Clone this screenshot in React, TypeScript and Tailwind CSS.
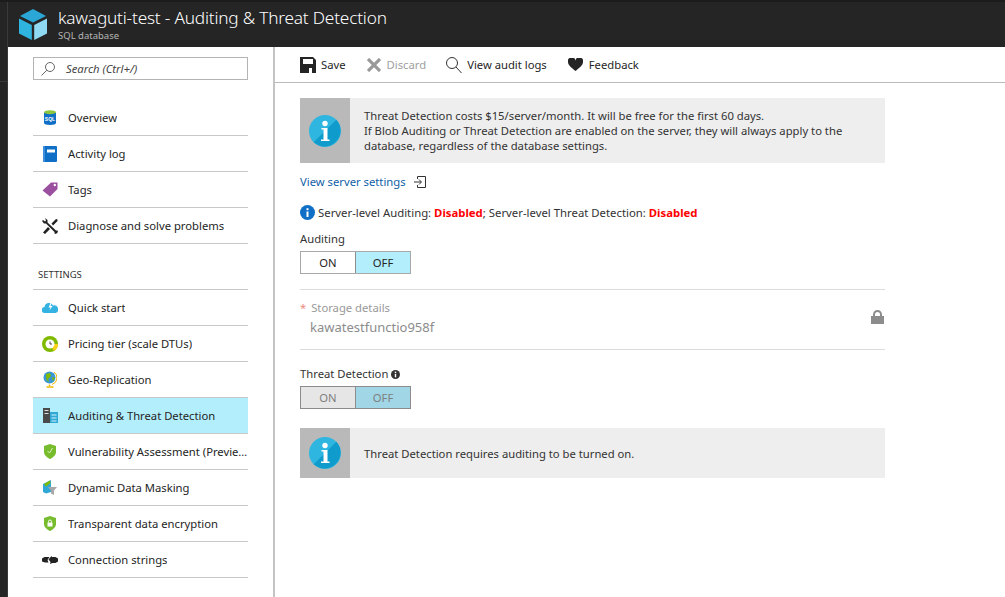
import React from "react";

const F = "font-['Noto_Sans','Open_Sans',sans-serif]";

function InfoBig() {
  return (
    <svg width="32" height="32" viewBox="0 0 32 32">
      <circle cx="16" cy="16" r="16" fill="#2fb6e0" />
      <path d="M27.3 4.7A16 16 0 0 1 4.7 27.3Z" fill="#0f9bcb" />
      <circle cx="16" cy="8.5" r="2.7" fill="#fff" />
      <path d="M12.5 13h6v11.5h2V26h-8.500v-1.500h2.500V14.500h-2Z" fill="#fff" />
    </svg>
  );
}

function Cube() {
  return (
    <svg width="28" height="31" viewBox="0 0 28 31">
      <path d="M14 0 27 7 14 13.500 1 7Z" fill="#2aa7d6" />
      <path d="M0 9.500 12.800 16V31L0 24.500Z" fill="#2fb4df" />
      <path d="M28 9.500 15.200 16V31L28 24.500Z" fill="#8fd9f2" />
    </svg>
  );
}

const icons: Record<string, React.ReactNode> = {
  overview: (
    <svg width="12" height="15" viewBox="0 0 12 15">
      <path d="M0 2.500H12V13C12 14.200 9.500 15 6 15 2.500 15 0 14.200 0 13Z" fill="#0f6fc6" />
      <ellipse cx="6" cy="2.200" rx="6" ry="2" fill="#8cc63f" />
      <text x="6" y="10.800" textAnchor="middle" fontSize="5" fontWeight="700" fill="#fff" fontFamily="Liberation Sans">SQL</text>
    </svg>
  ),
  log: (
    <svg width="14" height="16" viewBox="0 0 14 16">
      <rect width="14" height="16" rx="1" fill="#0f6fc6" />
      <rect x="0" y="0" width="2" height="16" fill="#3d8fdc" />
      <rect x="4" y="3.500" width="8" height="3" fill="#fff" />
    </svg>
  ),
  tag: (
    <svg width="16" height="15" viewBox="0 0 16 15">
      <path d="M9 0.500h6.500V7L8 14.500 0.500 8.500Z" fill="#9b4f9f" />
      <circle cx="12.800" cy="3" r="1.200" fill="#fff" />
    </svg>
  ),
  tools: (
    <svg width="16" height="16" viewBox="0 0 16 16" fill="#222">
      <path d="M3 0 5.500 2V4.500L14 12.500 15.500 12.500 16 14 14 16 12.500 15.500V14L4 5.500H2L0 3 1 2 3 3.500 4 2.500Z" />
      <path d="M9.500 5.500 14 1 15.500 1.500 15.500 3 11 7.500ZM6 9 8 11 3 16 1 14.500Z" />
    </svg>
  ),
  cloud: (
    <svg width="16" height="10" viewBox="0 0 16 10">
      <path d="M3 10A3 3 0 0 1 2.500 4 4.500 4.500 0 0 1 11 2.500 3.500 3.500 0 0 1 13.500 10Z" fill="#34b2e2" />
      <path d="M8.500 0 6.500 4.500h2L7.500 7.500 10.500 3h-2l1-3Z" fill="#fff" />
    </svg>
  ),
  pricing: (
    <svg width="16" height="16" viewBox="0 0 16 16">
      <circle cx="8" cy="8" r="8" fill="#7fba00" />
      <path d="M8 8 16 8A8 8 0 0 1 12 15Z" fill="#fcd116" />
      <circle cx="8" cy="8" r="4.500" fill="#fff" />
      <path d="M8 5.500V8H10" stroke="#444" fill="none" />
    </svg>
  ),
  geo: (
    <svg width="14" height="17" viewBox="0 0 14 17">
      <circle cx="6.500" cy="6.500" r="6" fill="#3b97d3" />
      <path d="M3 3 7 2 8 5 5 8 6 11 3.500 9ZM9 6 12 7 10 10Z" fill="#7fba00" />
      <path d="M11 1A7 7 0 0 1 9 13.500" stroke="#f2b705" fill="none" />
      <path d="M6.500 13.500V15M3.500 16h7" stroke="#f2b705" strokeWidth="1.500" />
    </svg>
  ),
  audit: (
    <svg width="15" height="15" viewBox="0 0 15 15">
      <rect width="7" height="15" fill="#4a4a4a" />
      <rect x="1.500" y="2" width="4" height="1" fill="#ddd" />
      <rect x="1.500" y="5" width="4" height="1" fill="#ddd" />
      <rect x="7" y="4" width="8" height="11" fill="#2fa8d5" />
      <path d="M8.500 7h5M8.500 10h5M8.500 13h5" stroke="#d6f3fb" />
    </svg>
  ),
  shieldCheck: (
    <svg width="12" height="15" viewBox="0 0 12 15">
      <path d="M6 0 12 2V8C12 11 9 13.500 6 15 3 13.500 0 11 0 8V2Z" fill="#76bc2d" />
      <path d="M3.500 7 5.500 9 8.500 4" stroke="#d8f0b8" fill="none" />
    </svg>
  ),
  mask: (
    <svg width="14" height="15" viewBox="0 0 14 15">
      <path d="M0 4 8 0V12L3 13.500 0 12Z" fill="#2fa8d5" />
      <path d="M1 4 7 0.500 7.500 3 3 6.500Z" fill="#7fba00" />
      <path d="M5 7h9l-3 3.500V15l-3-1.500v-3Z" fill="#a8a8a8" />
    </svg>
  ),
  shieldLock: (
    <svg width="12" height="15" viewBox="0 0 12 15">
      <path d="M6 0 12 2V8C12 11 9 13.500 6 15 3 13.500 0 11 0 8V2Z" fill="#76bc2d" />
      <rect x="3.500" y="6.500" width="5" height="4" fill="#fff" />
      <path d="M4.500 6.500V5.500a1.500 1.500 0 0 1 3 0v1" stroke="#fff" fill="none" />
    </svg>
  ),
  conn: (
    <svg width="16" height="8" viewBox="0 0 16 8" fill="#222">
      <path d="M0 2.500 2.500 1H7.500L5.500 4 6.500 6.500H3L0 5.500Z" />
      <path d="M16 2.500 13.500 1H10L9.500 0 6.500 3.500 8.500 6 8 8 10.500 7H13.500L16 5.500Z" />
    </svg>
  ),
};

function NavItem({ icon, label, active }: { icon: string; label: string; active?: boolean }) {
  return (
    <div className={`flex h-9 items-center border-b border-[#c8c8c8] ${active ? "bg-[#b3eefc]" : ""}`}>
      <div className="flex w-[35px] shrink-0 justify-center pr-[1px]">{icons[icon]}</div>
      <span className="truncate pt-[2px] text-[11.25px] text-[#252525]">{label}</span>
    </div>
  );
}

function Toggle({ disabled }: { disabled?: boolean }) {
  return (
    <div className={`flex h-[23px] w-[111px] border pt-0 text-[11.25px] ${disabled ? "border-[#8c8c8c] text-[#7f7f7f]" : "border-[#a8a8a8] text-[#252525]"}`}>
      <div className={`flex w-[54px] items-center justify-center pt-[1px] ${disabled ? "bg-[#e6e6e6]" : "bg-white"}`}>ON</div>
      <div className={`flex flex-1 items-center justify-center border-l pt-[1px] ${disabled ? "border-[#8c8c8c] bg-[#a0d6e6]" : "border-[#8c8c8c] bg-[#b3eefc]"}`}>OFF</div>
    </div>
  );
}

function Notice({ h, children }: { h: string; children: React.ReactNode }) {
  return (
    <div className={`flex w-[585px] bg-[#eeeeee] ${h}`}>
      <div className="flex w-[50px] shrink-0 items-center justify-center bg-[#b9b9b9]">
        <InfoBig />
      </div>
      <div className="flex flex-col justify-center pl-[14px] text-[11.25px] leading-[15px] text-[#333]">{children}</div>
    </div>
  );
}

export default function App() {
  return (
    <div className={`${F} flex h-[597px] w-[1005px] flex-col overflow-hidden bg-white`}>
      <header className="flex h-[47px] shrink-0 flex-col bg-[#252525]">
        <div className="h-[2px] bg-[#1c1c1c]" />
        <div className="flex flex-1 items-center">
          <div className="flex h-full w-2 shrink-0 border-r border-[#3a3a3a]" />
          <div className="ml-[11px] flex"><Cube /></div>
          <div className="ml-[11px] flex flex-col pb-[1px]">
            <span className="text-[17.25px] font-light leading-[22px] tracking-[-0.2px] text-white">kawaguti-test - Auditing &amp; Threat Detection</span>
            <span className="mt-[1px] text-[9.5px] leading-[12px] text-[#b5b5b5]">SQL database</span>
          </div>
        </div>
      </header>
      <div className="flex flex-1">
        <div className="flex w-2 shrink-0 flex-col border-r border-[#3a3a3a] bg-[#252525]">
          <div className="h-[35px] border-b border-[#3a3a3a]" />
        </div>
        <aside className="w-[265px] shrink-0 px-[25px] pt-[10px]">
          <div className="flex h-[23px] w-[215px] items-center border border-[#b4b4b4] pl-[6px]">
            <svg width="16" height="16" viewBox="0 0 16 16" fill="none" stroke="#666" strokeWidth="1">
              <circle cx="10" cy="6" r="4.500" />
              <path d="M6.800 9.200 1.500 14.500" />
            </svg>
            <span className="ml-[10px] pt-[1px] text-[11.25px] italic text-[#444]">Search (Ctrl+/)</span>
          </div>
          <nav className="mt-[20px] w-[215px]">
            <NavItem icon="overview" label="Overview" />
            <NavItem icon="log" label="Activity log" />
            <NavItem icon="tag" label="Tags" />
            <NavItem icon="tools" label="Diagnose and solve problems" />
            <div className="flex h-[46px] items-end border-b border-[#c8c8c8] pb-[7px] pl-[5px] text-[9.5px] text-[#333]">SETTINGS</div>
            <NavItem icon="cloud" label="Quick start" />
            <NavItem icon="pricing" label="Pricing tier (scale DTUs)" />
            <NavItem icon="geo" label="Geo-Replication" />
            <NavItem icon="audit" label="Auditing & Threat Detection" active />
            <NavItem icon="shieldCheck" label="Vulnerability Assessment (Preview)" />
            <NavItem icon="mask" label="Dynamic Data Masking" />
            <NavItem icon="shieldLock" label="Transparent data encryption" />
            <NavItem icon="conn" label="Connection strings" />
          </nav>
        </aside>
        <div className="w-[2px] shrink-0 bg-[#c4c4c4]" />
        <main className="flex-1">
          <div className="flex h-[36px] items-center border-b border-[#b9b9b9] pl-[25px] text-[11.25px] text-[#252525]">
            <svg width="16" height="16" viewBox="0 0 16 16" fill="#252525">
              <path fillRule="evenodd" d="M0 0H13L16 3V16H0ZM3 2V7H13V2ZM9 11V16H12V11Z" />
            </svg>
            <span className="ml-[5px] pt-[1px]">Save</span>
            <svg className="ml-[21px]" width="14" height="14" viewBox="0 0 14 14" stroke="#999" strokeWidth="3.200">
              <path d="M1 1 13 13M13 1 1 13" />
            </svg>
            <span className="ml-[6px] pt-[1px] text-[#a0a0a0]">Discard</span>
            <svg className="ml-[19px]" width="17" height="18" viewBox="0 0 17 18" fill="none" stroke="#333">
              <circle cx="7" cy="7" r="5.500" />
              <path d="M11 11 16.500 17" />
            </svg>
            <span className="ml-[5px] pt-[1px]">View audit logs</span>
            <svg className="ml-[21px]" width="15" height="13" viewBox="0 0 15 13" fill="#252525">
              <path d="M7.500 13C4 10 0 7.500 0 4A3.800 3.800 0 0 1 7.500 2.500 3.800 3.800 0 0 1 15 4C15 7.500 11 10 7.500 13Z" />
            </svg>
            <span className="ml-[6px] pt-[1px]">Feedback</span>
          </div>
          <div className="pl-[25px] pt-[15px]">
            <Notice h="h-[65px]">
              <p>Threat Detection costs $15/server/month. It will be free for the first 60 days.</p>
              <p>If Blob Auditing or Threat Detection are enabled on the server, they will always apply to the</p>
              <p>database, regardless of the database settings.</p>
            </Notice>
            <div className="mt-[11px] flex h-[16px] items-center text-[11.25px] text-[#0f5fa8]">
              View server settings
              <svg className="ml-[8px]" width="12" height="12" viewBox="0 0 12 12" fill="none" stroke="#333">
                <path d="M3.500 3V.5h8v11h-8V9M0 6h7M5 3.500 7.500 6 5 8.500" />
              </svg>
            </div>
            <div className="mt-[14px] flex h-[16px] items-center text-[11.35px] text-[#333]">
              <svg width="15" height="15" viewBox="0 0 15 15">
                <circle cx="7.500" cy="7.500" r="7.500" fill="#0f6fc6" />
                <rect x="6.500" y="6.500" width="2" height="5.500" fill="#fff" />
                <rect x="6.500" y="3.200" width="2" height="2" fill="#fff" />
              </svg>
              <span className="ml-[3px]">
                Server-level Auditing: <b className="text-[#ff0000]">Disabled</b>; Server-level Threat Detection: <b className="text-[#ff0000]">Disabled</b>
              </span>
            </div>
            <div className="mt-[11px] text-[11.25px] leading-[16px] text-[#333]">Auditing</div>
            <div className="mt-[4px]"><Toggle /></div>
            <div className="mt-[15px] w-[585px] border-t border-[#dcdcdc]" />
            <div className="flex h-[60px] w-[585px] items-center justify-between border-b border-[#dcdcdc] pb-[2px]">
              <div className="flex flex-col">
                <div className="text-[11.25px] leading-[16px] text-[#999]"><span className="text-[#f08a80]">*</span> <span className="ml-[2px]">Storage details</span></div>
                <div className="ml-[10px] mt-[1px] text-[13px] leading-[20px] text-[#8c8c8c]">kawatestfunctio958f</div>
              </div>
              <svg className="mb-[4px] mr-[1px]" width="13" height="14" viewBox="0 0 13 14" fill="#8c8c8c">
                <path fillRule="evenodd" d="M2 6V4.500a4.500 4.500 0 0 1 9 0V6h2v8H0V6ZM4 6h5V4.500a2.500 2.500 0 0 0-5 0Z" />
              </svg>
            </div>
            <div className="mt-[16px] flex h-[16px] items-center text-[11.25px] text-[#333]">
              Threat Detection
              <svg className="ml-[3px]" width="9" height="9" viewBox="0 0 9 9">
                <circle cx="4.500" cy="4.500" r="4.500" fill="#333" />
                <rect x="3.800" y="3.800" width="1.400" height="3.500" fill="#fff" />
                <rect x="3.800" y="1.600" width="1.400" height="1.400" fill="#fff" />
              </svg>
            </div>
            <div className="mt-[4px]"><Toggle disabled /></div>
            <div className="mt-[19px]">
              <Notice h="h-[50px]">
                <p>Threat Detection requires auditing to be turned on.</p>
              </Notice>
            </div>
          </div>
        </main>
      </div>
    </div>
  );
}
